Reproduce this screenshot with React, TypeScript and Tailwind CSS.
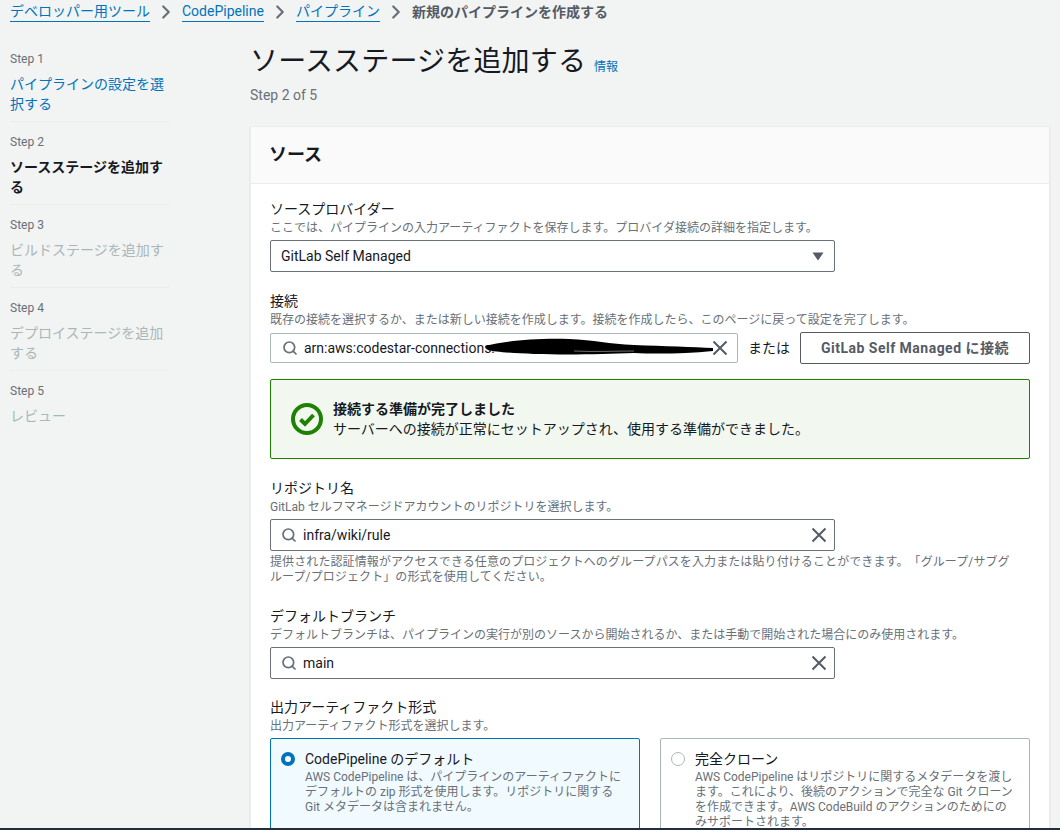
import { ChevronRight, Search } from 'lucide-react';

const font = "[font-family:Roboto,'Noto_Sans_CJK_JP',sans-serif] [text-spacing-trim:space-all]";

const steps = [
  { step: 'Step 1', label: 'パイプラインの設定を選択する', tone: 'text-[#0073bb]' },
  { step: 'Step 2', label: 'ソースステージを追加する', tone: 'text-[#16191f] font-bold' },
  { step: 'Step 3', label: 'ビルドステージを追加する', tone: 'text-[#aab7b8]' },
  { step: 'Step 4', label: 'デプロイステージを追加する', tone: 'text-[#aab7b8]' },
  { step: 'Step 5', label: 'レビュー', tone: 'text-[#aab7b8]' },
];

function Crumb({ children }: { children: string }) {
  return <a className="border-b border-[#0073bb] leading-[19px] text-[#0073bb]">{children}</a>;
}

function Sep() {
  return <ChevronRight size={22} strokeWidth={2.4} className="mx-[5px] text-[#687078]" />;
}

function Field({ title, hint, className, children }: { title: string; hint: string; className: string; children: React.ReactNode }) {
  return (
    <div className={className}>
      <div className="text-[14px] leading-[20px] text-[#16191f]">{title}</div>
      <div className="mb-[4px] mt-[2px] text-[12px] leading-[15px] text-[#687078]">{hint}</div>
      {children}
    </div>
  );
}

function ClearIcon() {
  return (
    <svg width="16" height="16" viewBox="0 0 16 16" className="shrink-0">
      <path d="M1.5 1.5l13 13M14.5 1.5l-13 13" fill="none" stroke="#545b64" strokeWidth="2" />
    </svg>
  );
}

function SearchInput({ value, className }: { value: string; className: string }) {
  return (
    <div className={`flex items-center rounded-[2px] border bg-white ${className}`}>
      <Search size={16} strokeWidth={2.6} className="shrink-0 text-[#687078]" />
      <span className="ml-[6px] flex-1 truncate text-[14px] text-[#16191f]">{value}</span>
      <ClearIcon />
    </div>
  );
}

export default function App() {
  return (
    <div className={`h-[830px] w-[1060px] overflow-hidden bg-[#f2f3f3] ${font}`}>
      <div className="flex h-[24px] items-center pl-[10px] text-[14px]">
        <Crumb>デベロッパー用ツール</Crumb>
        <Sep />
        <Crumb>CodePipeline</Crumb>
        <Sep />
        <Crumb>パイプライン</Crumb>
        <Sep />
        <span className="font-bold text-[#545b64]">新規のパイプラインを作成する</span>
      </div>

      <div className="flex h-[804px] overflow-hidden">
        <nav className="ml-[10px] mt-[27px] w-[159px] shrink-0">
          {steps.map((s, i) => (
            <div key={s.step} className={`pb-[7px] ${i > 0 ? 'pt-[12px]' : ''} ${i < 4 ? 'border-b border-[#eaeded]' : ''}`}>
              <div className="text-[12px] leading-[16px] text-[#687078]">{s.step}</div>
              <div className={`mt-[7px] text-[14px] leading-[20px] ${s.tone}`}>{s.label}</div>
            </div>
          ))}
        </nav>

        <main className="ml-[81px] w-[800px] shrink-0">
          <div className="mt-[18px] flex items-baseline">
            <h1 className="text-[28px] font-normal leading-[40px] tracking-[0.17px] text-[#16191f]">ソースステージを追加する</h1>
            <a className="ml-[8px] text-[12px] text-[#0073bb]">情報</a>
          </div>
          <div className="mt-[3px] text-[14px] leading-[20px] text-[#687078]">Step 2 of 5</div>

          <section className="mt-[21px] h-[720px] border border-[#eaeded] bg-white shadow-[0_1px_1px_rgba(0,28,36,0.2)]">
            <div className="flex h-[57px] items-center border-b border-[#eaeded] bg-[#fafafa] pb-[2px] pl-[18px]">
              <h2 className="text-[18px] font-bold text-[#16191f]">ソース</h2>
            </div>
            <div className="pl-[19px]">
              <Field className="pt-[15px]" title="ソースプロバイダー" hint="ここでは、パイプラインの入力アーティファクトを保存します。プロバイダ接続の詳細を指定します。">
                <div className="flex h-8 w-[565px] items-center justify-between rounded-[2px] border border-[#687078] bg-white pl-[10px] pr-[10px] text-[14px] text-[#16191f]">
                  GitLab Self Managed
                  <svg width="12" height="9" viewBox="0 0 12 9"><path d="M0.5 0.5h11L6 8.5z" fill="#545b64" /></svg>
                </div>
              </Field>

              <Field className="mt-[19px]" title="接続" hint="既存の接続を選択するか、または新しい接続を作成します。接続を作成したら、このページに戻って設定を完了します。">
                <div className="flex items-center">
                  <div className="relative shrink-0">
                    <SearchInput value="arn:aws:codestar-connections:" className="h-[30px] w-[468px] border-[#aab7b8] pl-[11px] pr-[9px]" />
                    <svg className="absolute left-[214px] top-[5px]" width="232" height="20" viewBox="0 0 232 20">
                      <path d="M1 8C20 3 50 0 85 1C110 2 125 6 150 7C180 8 210 9 229 10L229 13C200 16 170 16 150 15C120 16 90 17 50 16C30 15 10 14 4 12Z" fill="#000" />
                      <path d="M90 13C110 14 130 13 150 13" fill="none" stroke="#9aa0a6" strokeWidth="0.7" />
                    </svg>
                  </div>
                  <span className="ml-[10px] shrink-0 text-[14px] text-[#16191f]">または</span>
                  <button className="ml-[10px] h-8 w-[230px] shrink-0 rounded-[2px] border border-[#545b64] bg-white text-[14px] font-bold tracking-[0.48px] text-[#545b64]">
                    GitLab Self Managed に接続
                  </button>
                </div>
                <div className="mt-[15px] flex h-[80px] w-[760px] items-center rounded-[2px] border border-[#1d8102] bg-[#f2f8f0] pl-[19px]">
                  <svg width="34" height="34" viewBox="0 0 34 34" className="shrink-0">
                    <circle cx="17" cy="17" r="14" fill="none" stroke="#1d8102" strokeWidth="4" />
                    <path d="M10.5 17.5l4.5 4.5 8.5-9" fill="none" stroke="#1d8102" strokeWidth="4" />
                  </svg>
                  <div className="ml-[9px] text-[14px] leading-[20px] text-[#16191f]">
                    <div className="font-bold">接続する準備が完了しました</div>
                    <div>サーバーへの接続が正常にセットアップされ、使用する準備ができました。</div>
                  </div>
                </div>
              </Field>

              <Field className="mt-[19px]" title="リポジトリ名" hint="GitLab セルフマネージドアカウントのリポジトリを選択します。">
                <SearchInput value="infra/wiki/rule" className="h-8 w-[565px] border-[#687078] pl-[10px] pr-[7px]" />
                <div className="mt-[4px] w-[750px] text-[12px] leading-[15px] tracking-[0.1px] text-[#687078] [line-break:loose]">
                  提供された認証情報がアクセスできる任意のプロジェクトへのグループパスを入力または貼り付けることができます。「グループ/サブグループ/プロジェクト」の形式を使用してください。
                </div>
              </Field>

              <Field className="mt-[21px]" title="デフォルトブランチ" hint="デフォルトブランチは、パイプラインの実行が別のソースから開始されるか、または手動で開始された場合にのみ使用されます。">
                <SearchInput value="main" className="h-8 w-[565px] border-[#687078] pl-[10px] pr-[7px]" />
              </Field>

              <Field className="mt-[18px]" title="出力アーティファクト形式" hint="出力アーティファクト形式を選択します。">
                <div className="grid grid-cols-[370px_370px] gap-[20px]">
                  <div className="flex h-[120px] rounded-[2px] border border-[#0073bb] bg-[#f1faff] pl-[10px] pr-[14px] pt-[10px]">
                    <span className="mt-[3px] box-border h-[14px] w-[14px] shrink-0 rounded-full border-[4px] border-[#0073bb] bg-white" />
                    <div className="ml-[10px]">
                      <div className="text-[14px] leading-[20px] text-[#16191f]">CodePipeline のデフォルト</div>
                      <div className="mt-[1px] text-[12px] leading-[15px] text-[#687078]">
                        AWS CodePipeline は、パイプラインのアーティファクトにデフォルトの zip 形式を使用します。リポジトリに関する Git メタデータは含まれません。
                      </div>
                    </div>
                  </div>
                  <div className="flex h-[120px] rounded-[2px] border border-[#aab7b8] bg-white pl-[10px] pr-[14px] pt-[10px]">
                    <span className="mt-[3px] h-[14px] w-[14px] shrink-0 rounded-full border border-[#aab7b8]" />
                    <div className="ml-[10px]">
                      <div className="text-[14px] leading-[20px] text-[#16191f]">完全クローン</div>
                      <div className="mt-[1px] text-[12px] leading-[15px] text-[#687078]">
                        AWS CodePipeline はリポジトリに関するメタデータを渡します。これにより、後続のアクションで完全な Git クローンを作成できます。AWS CodeBuild のアクションのためにのみサポートされます。
                      </div>
                    </div>
                  </div>
                </div>
              </Field>
            </div>
          </section>
        </main>
      </div>
      <div className="fixed bottom-0 left-0 h-[2px] w-[1060px] bg-[#232f3e]" />
    </div>
  );
}
